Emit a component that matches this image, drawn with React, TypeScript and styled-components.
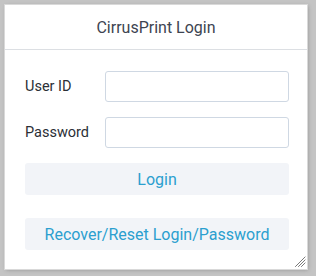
import React from "react";
import styled, { createGlobalStyle } from "styled-components";

const Global = createGlobalStyle`
  html, body { margin: 0; padding: 0; background: #c4c4c4; }
  body { font-family: Roboto, "Liberation Sans", sans-serif; }
  * { box-sizing: border-box; }
`;

const Page = styled.div`
  padding: 5px 9px 7px 5px;
  width: 316px;
  height: 276px;
`;

const Card = styled.div`
  position: relative;
  width: 302px;
  height: 264px;
  background: #fff;
  box-shadow: 0 0 0 1px #d9d9d9, 1px 1px 4px rgba(0, 0, 0, 0.25);
  display: flex;
  flex-direction: column;
`;

const Header = styled.div`
  height: 45px;
  border-bottom: 1px solid #dcdfe3;
  display: flex;
  align-items: center;
  justify-content: center;
  font-size: 16px;
  color: #3d4451;
`;

const Body = styled.div`
  padding: 21px 18px 0 20px;
  display: flex;
  flex-direction: column;
`;

const Row = styled.div<{ $mb: number }>`
  display: flex;
  align-items: center;
  height: 31px;
  margin-bottom: ${(p) => p.$mb}px;
`;

const Label = styled.label`
  width: 80px;
  font-size: 14.5px;
  color: #2b2f36;
`;

const Input = styled.input`
  width: 184px;
  height: 31px;
  border: 1px solid #cfd8e3;
  border-radius: 3px;
  outline: none;
  padding: 0 8px;
  font-family: inherit;
`;

const Button = styled.button<{ $mb: number }>`
  width: 264px;
  height: 32px;
  border: none;
  border-radius: 3px;
  background: #f2f4f8;
  color: #2b9fcf;
  font-family: Roboto, "Liberation Sans", sans-serif;
  font-size: 16px;
  padding: 0;
  margin-bottom: ${(p) => p.$mb}px;
  cursor: pointer;
`;

const Grip = styled.svg`
  position: absolute;
  right: 1px;
  bottom: 2px;
  width: 11px;
  height: 11px;
`;

export default function App() {
  return (
    <>
      <Global />
      <Page>
        <Card>
          <Header>CirrusPrint Login</Header>
          <Body>
            <Row $mb={15}>
              <Label>User ID</Label>
              <Input type="text" />
            </Row>
            <Row $mb={15}>
              <Label>Password</Label>
              <Input type="password" />
            </Row>
            <Button $mb={23}>Login</Button>
            <Button $mb={0}>Recover/Reset Login/Password</Button>
          </Body>
          <Grip viewBox="0 0 11 11">
            <g stroke="#222" strokeWidth="1" strokeDasharray="1 0.41">
              <line x1="0.5" y1="10.5" x2="10.5" y2="0.5" />
              <line x1="3.5" y1="10.5" x2="10.5" y2="3.5" />
              <line x1="6.5" y1="10.5" x2="10.5" y2="6.5" />
            </g>
          </Grip>
        </Card>
      </Page>
    </>
  );
}
